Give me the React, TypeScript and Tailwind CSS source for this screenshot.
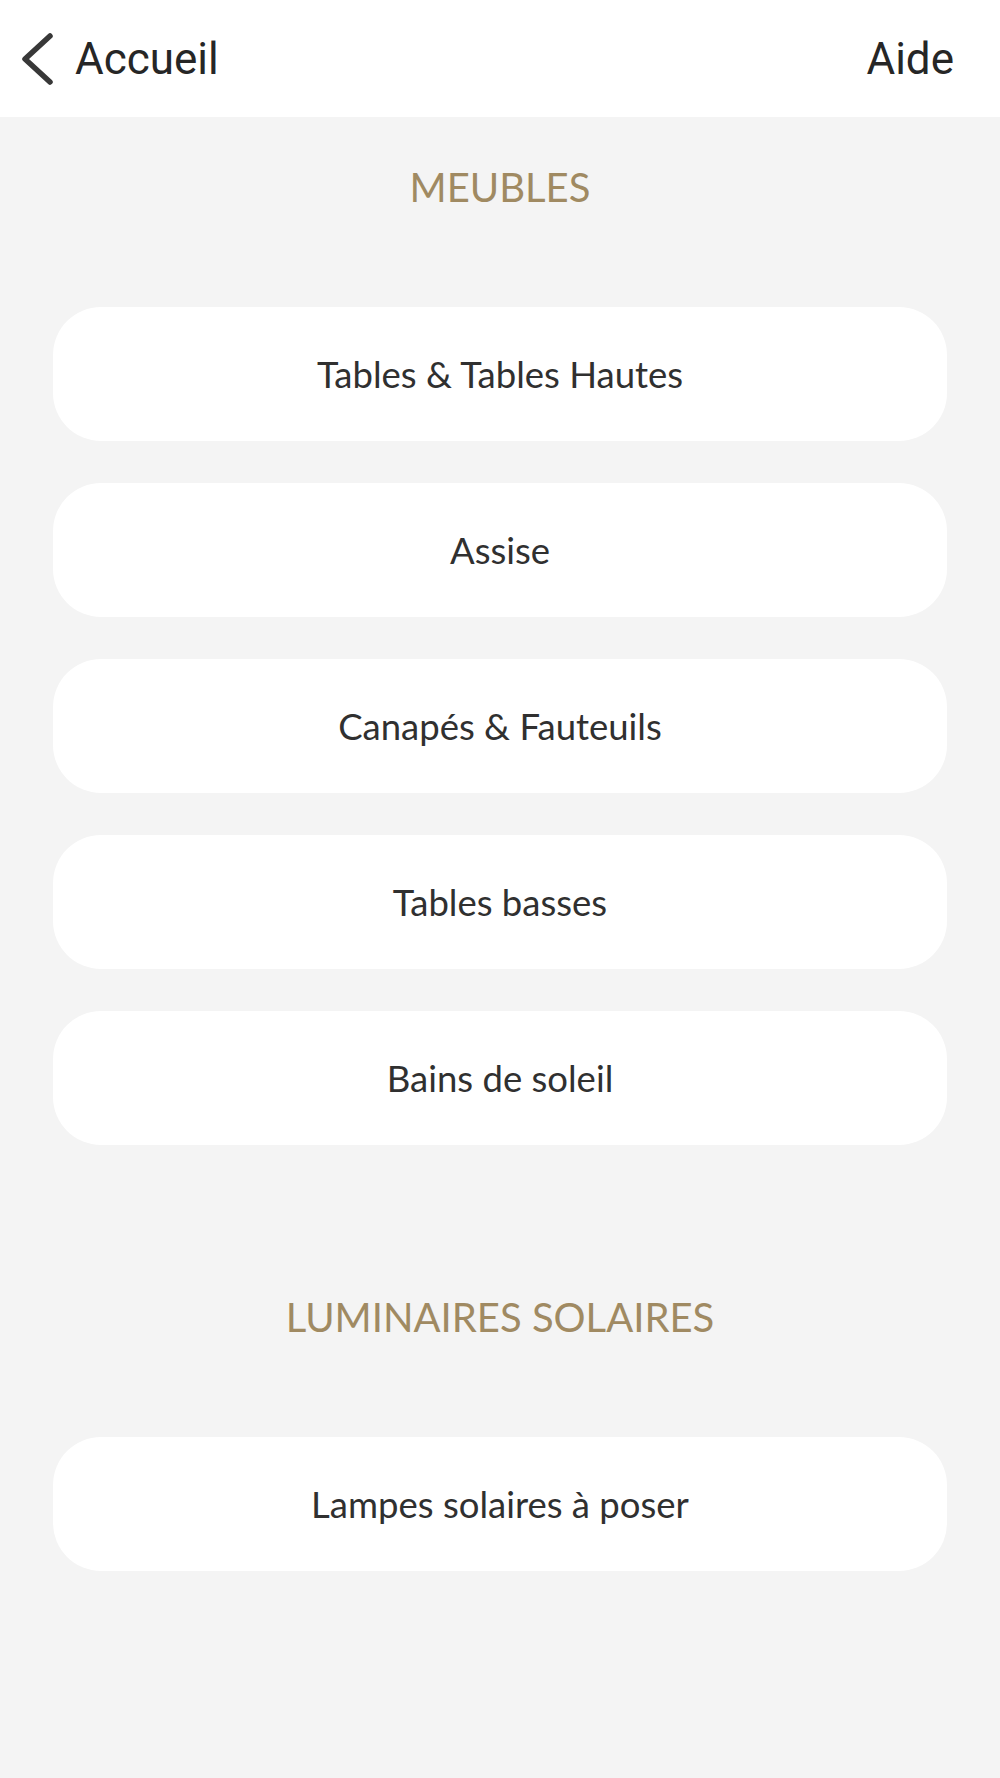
import React from 'react'

const SECTIONS = [
  {
    title: 'MEUBLES',
    items: ['Tables & Tables Hautes', 'Assise', 'Canapés & Fauteuils', 'Tables basses', 'Bains de soleil'],
  },
  {
    title: 'LUMINAIRES SOLAIRES',
    items: ['Lampes solaires à poser'],
  },
]

function BackChevron() {
  return (
    <svg width="34" height="54" viewBox="0 0 34 54" fill="none" className="shrink-0">
      <path
        d="M29 4 L4 27 L29 50"
        stroke="#383838"
        strokeWidth="5.5"
        strokeLinecap="round"
        strokeLinejoin="round"
      />
    </svg>
  )
}

export default function App() {
  return (
    <div className="min-h-screen bg-[#f4f4f4] font-['Lato','Noto_Sans',sans-serif]">
      {/* Top bar */}
      <header className="h-[117px] bg-white flex items-center justify-between pl-[21px] pr-[46px] font-['Roboto','Liberation_Sans',sans-serif] text-[44px] leading-none text-[#262626]">
        <button className="flex items-center gap-[20px]">
          <BackChevron />
          <span>Accueil</span>
        </button>
        <button>Aide</button>
      </header>

      <main className="px-[53px] pt-[46px] pb-[200px]">
        {SECTIONS.map((section, i) => (
          <section key={section.title} className={i > 0 ? 'mt-[148px]' : ''}>
            <h2 className="text-center text-[40px] leading-[48px] text-[#a08a62]">
              {section.title}
            </h2>
            <div className="mt-[96px] flex flex-col gap-[42px]">
              {section.items.map((item) => (
                <button
                  key={item}
                  className="h-[134px] w-full rounded-[48px] bg-white flex items-center justify-center text-[36.5px] leading-[43px] text-[#303030]"
                >
                  {item}
                </button>
              ))}
            </div>
          </section>
        ))}
      </main>
    </div>
  )
}
